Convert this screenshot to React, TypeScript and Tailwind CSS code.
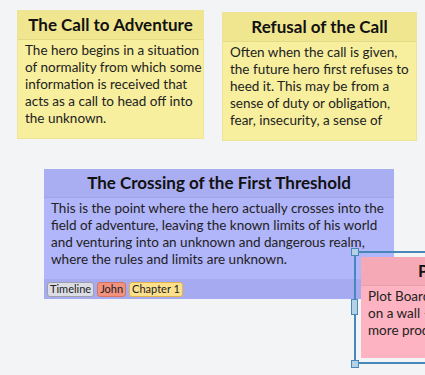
import React from 'react';

interface Tag {
	label: string;
	className: string;
}

interface CardProps {
	title: string;
	lines: string[];
	className: string;
	headerClass: string;
	bodyClass: string;
	tags?: Tag[];
}

const FONT = { fontFamily: 'Lato, "Noto Sans", sans-serif' };

function Card({ title, lines, className, headerClass, bodyClass, tags }: CardProps): React.ReactElement {
	return (
		<div className={`absolute flex flex-col overflow-hidden ${className}`}>
			<div className={`h-[29px] shrink-0 flex items-center justify-center border-b border-black/5 ${headerClass}`}>
				<span className="text-[17px] font-bold text-[#111] whitespace-nowrap">{title}</span>
			</div>
			<div className={`flex-1 flex flex-col px-[7px] pt-[2px] text-[13.5px] leading-[17px] text-[#222] ${bodyClass}`}>
				{lines.map((l) => (
					<span key={l} className="whitespace-nowrap">
						{l}
					</span>
				))}
			</div>
			{tags && (
				<div className="h-[20px] shrink-0 flex items-center gap-[3px] px-[3px] bg-[#a6aaf0]">
					{tags.map((t) => (
						<span
							key={t.label}
							className={`h-[15px] px-[2px] flex items-center rounded-[3px] border text-[11px] text-[#222] ${t.className}`}
						>
							{t.label}
						</span>
					))}
				</div>
			)}
		</div>
	);
}

export default function App(): React.ReactElement {
	return (
		<div className="relative w-[425px] h-[375px] overflow-hidden bg-[#f3f4f6]" style={FONT}>
			{/* Yellow stage cards */}
			<Card
				title="The Call to Adventure"
				lines={[
					'The hero begins in a situation',
					'of normality from which some',
					'information is received that',
					'acts as a call to head off into',
					'the unknown.',
				]}
				className="left-[17px] top-[10px] w-[187px] h-[129px] border border-[#ede49a]"
				headerClass="bg-[#f0e68f]"
				bodyClass="bg-[#f7ef9e]"
			/>
			<Card
				title="Refusal of the Call"
				lines={[
					'Often when the call is given,',
					'the future hero first refuses to',
					'heed it. This may be from a',
					'sense of duty or obligation,',
					'fear, insecurity, a sense of',
				]}
				className="left-[222px] top-[12px] w-[195px] h-[129px] border border-[#ede49a]"
				headerClass="bg-[#f0e68f]"
				bodyClass="bg-[#f7ef9e]"
			/>

			{/* Purple threshold card */}
			<Card
				title="The Crossing of the First Threshold"
				lines={[
					'This is the point where the hero actually crosses into the',
					'field of adventure, leaving the known limits of his world',
					'and venturing into an unknown and dangerous realm,',
					'where the rules and limits are unknown.',
				]}
				className="left-[44px] top-[169px] w-[350px] h-[130px]"
				headerClass="bg-[#a9adf2]"
				bodyClass="bg-[#b1b5fa]"
				tags={[
					{ label: 'Timeline', className: 'bg-[#dcdce4] border-[#a0a0a8]' },
					{ label: 'John', className: 'bg-[#f2917e] border-[#d47564]' },
					{ label: 'Chapter 1', className: 'bg-[#fde08c] border-[#e0b44c]' },
				]}
			/>

			{/* Pink selected card */}
			<Card
				title="Plot Board"
				lines={['Plot Board is a canvas', 'on a wall – only far', 'more productive.']}
				className="left-[361px] top-[257px] w-[64px] h-[101px]"
				headerClass="bg-[#f5a9b6] !justify-start pl-[57px]"
				bodyClass="bg-[#fdb3c1]"
			/>

			{/* Selection frame + handles */}
			<div className="absolute left-[354px] top-[251px] w-[80px] h-[113px] border-2 border-[#4a87b9]" />
			<div className="absolute left-[351px] top-[248px] w-[8px] h-[8px] bg-[#b5d1e6] border border-[#4a87b9]" />
			<div className="absolute left-[351px] top-[299px] w-[7px] h-[16px] bg-[#b5d1e6] border border-[#4a87b9]" />
			<div className="absolute left-[351px] top-[360px] w-[8px] h-[8px] bg-[#b5d1e6] border border-[#4a87b9]" />
		</div>
	);
}
